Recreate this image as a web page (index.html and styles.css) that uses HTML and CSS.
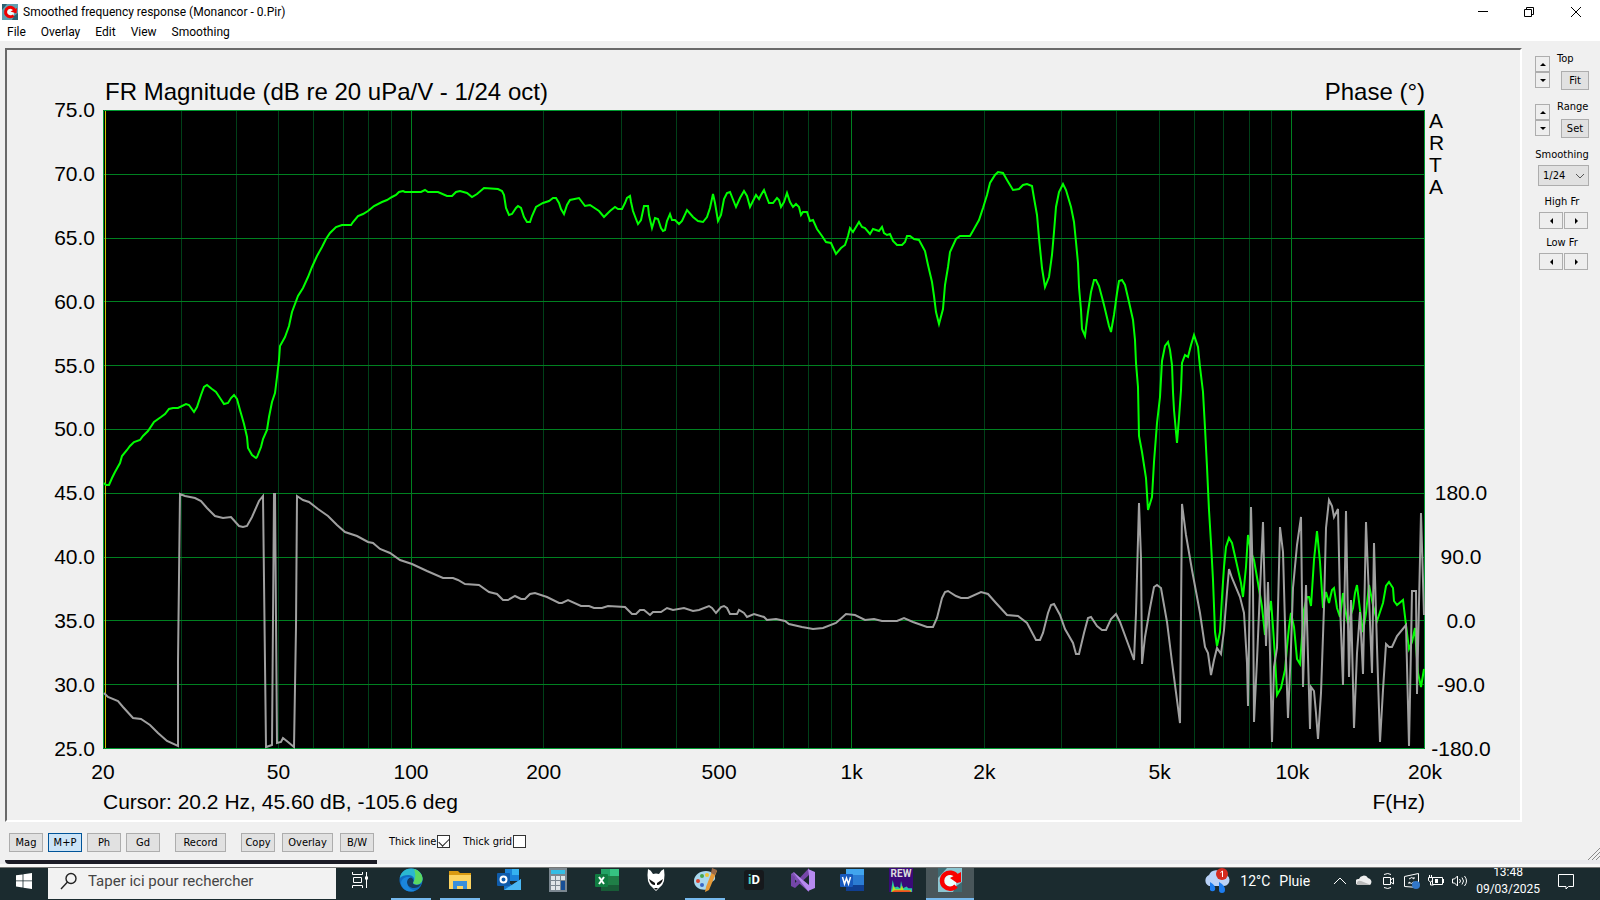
FILE: index.html
```html
<!DOCTYPE html>
<html lang="fr">
<head>
    <meta charset="UTF-8">
    <meta name="viewport" content="width=device-width, initial-scale=1.0">
    <title>Smoothed frequency response</title>
    <link rel="stylesheet" href="styles.css">
</head>
<body>
    <div class="window">
        <header class="titlebar">
            <svg class="app-icon" viewBox="0 0 16 16">
                <rect width="16" height="16" fill="#5f9fb0"/>
                <path d="M0 0h5L0 6zM12 12l4-3v7h-6z" fill="#2d5f70"/>
                <path d="M11.500 11.500A4.700 4.700 0 1 1 12.500 6" fill="#e8ffff" stroke="#f00000" stroke-width="3"/>
                <path d="M8.500 7.500L15 4l-.5 5.500z" fill="#f00000"/>
            </svg>
            <h1>Smoothed frequency response (Monancor - 0.Pir)</h1>
            <div class="win-buttons">
                <button aria-label="Minimize"><svg width="12" height="12" viewBox="0 0 12 12"><path d="M1 5.500h10" /></svg></button>
                <button aria-label="Restore"><svg width="12" height="12" viewBox="0 0 12 12"><path d="M1.500 3.500h7v7h-7zM3.500 3.500v-2h7v7h-2"/></svg></button>
                <button aria-label="Close"><svg width="12" height="12" viewBox="0 0 12 12"><path d="M1 1l10 10M11 1L1 11"/></svg></button>
            </div>
        </header>

        <nav class="menubar">
            <a href="#">File</a>
            <a href="#">Overlay</a>
            <a href="#">Edit</a>
            <a href="#">View</a>
            <a href="#">Smoothing</a>
        </nav>

        <main class="content">
            <section class="chart">
                <div class="chart-head">
                    <span class="magnitude">FR Magnitude (dB re 20 uPa/V - 1/24 oct)</span>
                    <span class="phase">Phase (°)</span>
                </div>

                <div class="db-axis">
                    <span>75.0</span>
                    <span>70.0</span>
                    <span>65.0</span>
                    <span>60.0</span>
                    <span>55.0</span>
                    <span>50.0</span>
                    <span>45.0</span>
                    <span>40.0</span>
                    <span>35.0</span>
                    <span>30.0</span>
                    <span>25.0</span>
                </div>

                <svg class="plot" viewBox="103 110 1322 639" preserveAspectRatio="none">
                    <rect class="back" x="103" y="110" width="1322" height="639"/>
                    <!-- frequency decades and their subdivisions -->
                    <path class="minor" d="M181.500 110V749M236.500 110V749M278.500 110V749M313.500 110V749M343.500 110V749M368.500 110V749M391.500 110V749M543.500 110V749M621.500 110V749M676.500 110V749M719.500 110V749M753.500 110V749M783.500 110V749M808.500 110V749M831.500 110V749M984.500 110V749M1061.500 110V749M1116.500 110V749M1159.500 110V749M1194.500 110V749M1223.500 110V749M1249.500 110V749M1271.500 110V749"/>
                    <path class="major" d="M103 174.500H1425M103 238.500H1425M103 301.500H1425M103 365.500H1425M103 429.500H1425M103 493.500H1425M103 557.500H1425M103 620.500H1425M103 684.500H1425M411.500 110V749M851.500 110V749M1291.500 110V749"/>
                    <rect class="border" x="103.500" y="110.500" width="1321" height="638"/>
                    <path class="cursor" d="M105.500 111V748"/>
                    <!-- magnitude -->
                    <polyline class="mag" points="104,483 106,485 109,485 112,478 115,472 120,463 122,456 127,450 130,446 134,442 140,440 143,436 148,431 154,422 161,417 165,414 169,409 173,408 178,408 186,404 189,405 194,412 197,407 201,395 204,387 207,385 212,389 216,392 220,398 224,404 228,403 231,398 234,395 237,399 240,410 244,424 247,437 248,448 252,455 256,458 257,457 261,447 263,439 267,430 269,417 272,402 275,393
                        277,377 279,360 280,346 285,337 289,326 292,312 298,296 303,288 308,277 312,267 317,256 322,247 326,239 330,233 336,227 342,225 351,225 353,222 358,216 363,214 368,211 374,206 382,202 387,200 392,197 396,195 399,192 403,191 405,192 421,192 425,190 428,192 438,192 447,196 452,196 456,192 460,191 467,193 472,197 477,194 484,188 498,189 502,191
                        504,195 506,208 509,215 512,214 516,208 518,206 521,208 524,217 527,222 530,222 532,216 536,207 543,203 549,201 553,198 556,198 559,203 561,209 564,214 567,205 570,200 579,198 582,202 585,206 590,205 599,211 604,217 610,211 615,207 618,209 622,209 625,203 627,198 630,196 631,202 633,211 636,219 638,224 641,220 644,206 648,206 649,215 652,228 655,218 658,219 661,228 663,231 665,230 667,221 670,214 672,220 675,220 679,224 682,221 687,210 693,217 698,221 703,222 707,217 710,208 713,194 715,203 718,221 721,215 724,199 727,193 730,192 732,197 736,207 740,198 744,191 747,196 750,207 756,195 759,199 761,195 764,190 767,198 769,203 773,203 777,198 779,200 781,207 784,202 787,193 790,202 793,207 796,204 799,207 801,215 803,212 807,212 810,221 813,220 817,229 822,236 826,242 831,243 836,254 841,248 845,245 848,236 850,228 853,232 859,222 862,227 865,228 870,234 873,229 879,231 882,227 884,233 887,235 890,234
                        893,241 897,245 902,245 905,242 907,236 910,236 914,239 919,240 925,251 928,265 932,282 934,296 936,312 939,324 943,309 945,285 948,267 950,252 956,239 960,236 970,236 974,229 979,220 983,208 987,195 990,183 995,175 998,172 1003,173 1007,180 1013,190 1019,189 1023,185 1027,184 1032,186 1034,198 1037,215 1039,238 1042,268 1045,287 1049,277 1052,255 1054,232 1056,207 1059,192 1063,184 1066,190 1071,207 1074,222 1076,242 1078,263 1079,287 1081,310 1082,329 1085,336 1088,312 1091,292 1094,280 1096,280 1099,286 1104,305 1109,326 1111,332 1114,315 1117,293 1119,281 1122,280 1125,285 1129,302 1133,320 1135,340 1136,363 1138,387 1139,436 1142,452 1146,478 1148,510
                        1152,497 1154,462 1157,423 1160,397 1162,361 1165,346 1168,342 1170,350 1172,365 1173,392 1174,410 1177,443 1179,418 1181,390 1182,363 1185,355 1188,357 1191,345 1194,335 1198,347 1200,367 1203,392 1205,428 1207,467 1209,510 1211,543 1213,580 1215,632 1217,646 1220,632 1222,597 1224,567 1226,547 1229,538 1232,543 1237,565 1241,583 1243,597 1246,567 1248,535 1251,552 1254,560 1258,583 1262,607 1265,635 1269,613 1271,601 1273,627 1275,657 1277,695 1281,688 1285,670 1287,647 1289,627 1291,613 1294,627 1297,659 1300,664 1302,637 1304,610 1307,597 1309,597 1311,606 1314,560 1317,531 1320,562 1323,608 1326,592 1329,603 1332,590 1334,588 1337,608 1340,617 1343,593 1345,608 1348,624 1353,608 1355,593 1357,585 1360,610 1363,632 1366,613 1369,585 1373,605 1377,621 1383,603 1386,586 1389,582 1393,588 1394,601 1397,605 1403,600 1406,625 1409,649 1412,642 1415,628 1416,645 1418,673 1421,687 1424,669"/>
                    <!-- phase -->
                    <polyline class="deg" points="104,693 108,697 118,701 123,707 133,718 141,719 150,725 158,733 167,741 178,746 178,662 180,494 185,496 195,498 201,501 207,508 215,516 223,518 231,517 239,526 243,527 247,526 252,517 259,501 263,496 264,580 266,747 272,745 274,494 275,494 277,743 281,742 283,738 288,742 294,747 296,627 297,496 303,500 309,502 318,509 328,516 337,525 345,532 357,536 368,542 373,543 380,549 390,553 400,560 412,564 427,571 443,578 453,578 458,580 465,584 479,585
                        489,592 497,594 503,600 508,600 515,596 521,599 525,599 530,594 535,593 547,597 559,603 562,603 568,600 581,606 589,606 594,608 602,608 608,606 625,607 632,614 636,614 640,610 644,610 650,615 653,612 661,612 667,608 673,610 684,608 693,611 699,610 709,606 712,608 716,613 721,607 724,606 727,608 730,614 737,614 739,610 744,613 747,617 754,614 764,617 767,620 776,619 785,621 789,624 802,627 813,629 823,628 836,623 846,614 855,615 865,620 874,619 882,621 897,621 904,618 913,622 927,627 933,627 937,618 942,598 945,592 948,591 956,596 961,598 968,598 981,592 988,594 996,603 1007,615 1018,616 1027,623 1036,640 1040,640 1043,633 1048,613 1051,605 1054,604 1060,615 1065,629 1073,643 1076,654 1079,654 1084,633 1088,618 1091,617 1097,626 1102,630 1106,630 1111,619 1116,614
                        1120,622 1134,660 1136,613 1139,503 1141,558 1142,664 1145,637 1150,608 1154,587 1157,585 1161,588 1167,622 1172,662 1180,723 1181,613 1182,504 1186,535 1192,570 1200,613 1205,647 1208,653 1211,675 1214,660 1217,648 1221,654 1224,630 1227,592 1229,569 1232,578 1240,597 1244,613 1247,663 1248,706 1251,507 1253,587 1254,722 1257,660 1260,590 1263,522 1266,646 1268,582 1270,653 1272,742 1274,667 1277,648 1280,527 1283,552 1286,660 1288,718 1291,647 1293,588 1297,545 1301,517 1302,597 1303,687 1306,585 1310,729 1311,687 1314,691 1316,713 1318,739 1321,693 1324,607 1326,528 1329,500 1332,506 1334,517 1338,509 1340,603 1343,685 1346,511 1349,677 1351,600 1354,728 1357,653 1360,612 1363,674 1366,522 1372,673 1374,543 1377,647 1380,742 1383,690 1386,644 1389,647 1392,647 1397,636 1406,625 1409,746 1411,647 1412,591 1416,591 1417,694 1421,513 1424,615"/>
                </svg>

                <div class="right-axis">
                    <p class="brand">A<br>R<br>T<br>A</p>
                    <div class="deg-axis">
                        <span>180.0</span>
                        <span>90.0</span>
                        <span>0.0</span>
                        <span>-90.0</span>
                        <span>-180.0</span>
                    </div>
                </div>

                <div class="freq-axis">
                    <span>20</span>
                    <span>50</span>
                    <span>100</span>
                    <span>200</span>
                    <span>500</span>
                    <span>1k</span>
                    <span>2k</span>
                    <span>5k</span>
                    <span>10k</span>
                    <span>20k</span>
                </div>

                <div class="chart-foot">
                    <span>Cursor: 20.2 Hz, 45.60 dB, -105.6 deg</span>
                    <span>F(Hz)</span>
                </div>
            </section>

            <aside class="side">
                <div class="spin-row">
                    <div class="spin">
                        <button class="up" aria-label="Top up"></button>
                        <button class="down" aria-label="Top down"></button>
                    </div>
                    <div class="spin-side">
                        <span>Top</span>
                        <button>Fit</button>
                    </div>
                </div>
                <div class="spin-row">
                    <div class="spin">
                        <button class="up" aria-label="Range up"></button>
                        <button class="down" aria-label="Range down"></button>
                    </div>
                    <div class="spin-side">
                        <span>Range</span>
                        <button>Set</button>
                    </div>
                </div>
                <label class="side-label" for="smoothing">Smoothing</label>
                <div class="select">
                    <select id="smoothing">
                        <option>1/24</option>
                        <option>1/12</option>
                        <option>1/6</option>
                        <option>1/3</option>
                    </select>
                    <svg width="10" height="6" viewBox="0 0 10 6"><path d="M1 1l4 4 4-4" fill="none" stroke="#555"/></svg>
                </div>
                <span class="side-label">High Fr</span>
                <div class="pair">
                    <button class="left" aria-label="High down"></button>
                    <button class="right" aria-label="High up"></button>
                </div>
                <span class="side-label">Low Fr</span>
                <div class="pair">
                    <button class="left" aria-label="Low down"></button>
                    <button class="right" aria-label="Low up"></button>
                </div>
            </aside>
        </main>

        <footer class="toolbar">
            <div class="group">
                <button>Mag</button>
                <button class="active">M+P</button>
                <button>Ph</button>
                <button>Gd</button>
            </div>
            <button class="wide">Record</button>
            <div class="group copy">
                <button>Copy</button>
                <button class="wide">Overlay</button>
                <button>B/W</button>
            </div>
            <label>Thick line <input type="checkbox" checked></label>
            <label>Thick grid <input type="checkbox"></label>
            <svg class="grip" width="12" height="12" viewBox="0 0 12 12"><path d="M0 12L12 0M4 12l8-8M8 12l4-4" stroke="#8a8a8a"/></svg>
        </footer>
    </div>

    <div class="behind">
        <div class="behind-dark"></div>
    </div>

    <div class="taskbar">
        <button class="task start" aria-label="Démarrer">
            <svg width="16" height="16" viewBox="0 0 16 16"><path d="M0 2.300l6.600-.9v6.100H0zM7.400 1.300L16 0v7.500H7.400zM0 8.300h6.600v6.200L0 13.600zM7.400 8.300H16V16l-8.600-1.300z" fill="#fff"/></svg>
        </button>
        <div class="search">
            <svg width="18" height="18" viewBox="0 0 18 18" fill="none" stroke="#222" stroke-width="1.400"><circle cx="11" cy="6.500" r="5"/><path d="M7.500 10L1 17"/></svg>
            <input type="text" placeholder="Taper ici pour rechercher" aria-label="Rechercher">
        </div>
        <button class="task" aria-label="Affichage des tâches">
            <svg width="17" height="16" viewBox="0 0 17 16" fill="none" stroke="#fff"><path d="M.5 0v2.500h10V0M1.500 5.500h8v5h-8zM.5 16v-2.500h10V16M14.500 0v16"/><path d="M13 4.500h3v3h-3z" fill="#fff" stroke="none"/></svg>
        </button>
        <div class="apps">
            <button class="task open" aria-label="Edge">
                <svg width="24" height="24" viewBox="0 0 24 24">
                    <circle cx="12" cy="12" r="11.500" fill="#0f6cc4"/>
                    <path d="M.8 10C2 3.500 7 .5 12 .5c7 0 11.500 5 11.500 10 0 4-3 6-6 6-2.500 0-4-1-3-2.500 2-3 0-7-5-7C6 7 2.500 8 .8 10z" fill="#2bb8d0"/>
                    <path d="M15 1c5 1.500 8.500 5.500 8.500 9.500 0 4-3 6-6 6-2.500 0-4-1-3-2.500 2.500-4 2-9 .5-13z" fill="#5bd860"/>
                    <path d="M8 14c0-3 2-4.500 4-4.500 2.500 1 3 3 2 5-.5 2 3 3.500 8 1.500-2 3-4 4-7 4-4 0-7-2.500-7-6z" fill="#173b5e"/>
                    <path d="M8 14c0 5 4 8 9 8.500-7 3-14-1-15-7 0-5 5-7.500 10-6-2 0-4 1.500-4 4.500z" fill="#1b86dc"/>
                </svg>
            </button>
            <button class="task open" aria-label="Explorateur">
                <svg width="24" height="24" viewBox="0 0 24 24"><path d="M1 3h9l2 2h11v5H1z" fill="#d99a12"/><path d="M1 7h22v14H1z" fill="#fcd462"/><path d="M5 21v-8h14v8h-4v-3H9v3z" fill="#3a8fdc"/></svg>
            </button>
            <button class="task" aria-label="Outlook">
                <svg width="24" height="24" viewBox="0 0 24 24"><path d="M8 1h14v12H8z" fill="#1a82d8"/><path d="M15 1h7v6h-7z" fill="#35b2f0"/><path d="M7 12l8 5 9-6v11H7z" fill="#1472c8"/><path d="M7 22l17-11v11z" fill="#4bb8f4"/><rect y="5" width="13" height="13" rx="1" fill="#0f5cab"/><circle cx="6.500" cy="11.500" r="3" fill="none" stroke="#fff" stroke-width="2"/></svg>
            </button>
            <button class="task" aria-label="Calculatrice">
                <svg width="24" height="24" viewBox="0 0 24 24"><path d="M3 0h18v24H3z" fill="#7b8790"/><path d="M5 2h14v4H5z" fill="#35bde4"/><path d="M5 8h4v4H5zM10 8h4v4h-4zM15 8h4v4h-4zM5 13h4v4H5zM10 13h4v4h-4zM5 18h4v4H5zM10 18h4v4h-4z" fill="#dfe5e8"/><path d="M15 13h4v9h-4z" fill="#174f96"/></svg>
            </button>
            <button class="task" aria-label="Excel">
                <svg width="24" height="24" viewBox="0 0 24 24"><path d="M6 1h18v22H6z" fill="#1f7f47"/><path d="M15 1h9v7h-9z" fill="#35c481"/><path d="M6 1h9v7H6z" fill="#23a366"/><path d="M6 17h18v6H6z" fill="#185c37"/><rect y="6" width="13" height="13" rx="1" fill="#107c41"/><path d="M4 9l5 7M9 9l-5 7" stroke="#fff" stroke-width="2"/></svg>
            </button>
            <button class="task" aria-label="foobar2000">
                <svg width="24" height="24" viewBox="0 0 24 24"><path d="M4 1q3 1 5 5 3-1 6 0 2-4 5-5 1 6 0 12-1 4-5 7l-3 3-3-3q-4-3-5-7-1-6 0-12z" fill="#fff"/><path d="M5 11l6 4v2c-3 0-5-2-6-6zM19 11l-6 4v2c3 0 5-2 6-6zM10 20h4l-2 2z" fill="#111"/></svg>
            </button>
            <button class="task open" aria-label="Paint">
                <svg width="24" height="24" viewBox="0 0 24 24"><path d="M1 13C1 7 7 3 13 3c6 0 10 4 9 8-1 3-4 2-5 4s1 3-1 5c-4 4-15 1-15-7z" fill="#a9d8ee"/><circle cx="5" cy="13" r="2" fill="#d84532"/><circle cx="9" cy="8" r="2" fill="#49a64b"/><circle cx="14" cy="7" r="2" fill="#f0c532"/><circle cx="9" cy="17" r="2" fill="#3a68c8"/><path d="M20 1l4 2-8 19-4 2 1-5z" fill="#e59a38"/><path d="M19 0l5 2-2 5-4-2z" fill="#9a6a48"/></svg>
            </button>
            <button class="task" aria-label="iD">
                <span class="id-logo"><i>i</i>D</span>
            </button>
            <button class="task" aria-label="Visual Studio">
                <svg width="24" height="24" viewBox="0 0 24 24"><path d="M0 6l3-2 15 14v6L0 8z" fill="#8256b8"/><path d="M0 6v12l4 2L18 7V0L4 15V9z" fill="#7446a8"/><path d="M2 4l16 13V7l-1-6 7 3v16l-7 3z" fill="#b78af0"/></svg>
            </button>
            <button class="task" aria-label="Word">
                <svg width="24" height="24" viewBox="0 0 24 24"><path d="M6 1h18v22H6z" fill="#2b7cd3"/><path d="M6 1h18v6H6z" fill="#41a5ee"/><path d="M6 17h18v6H6z" fill="#103f91"/><rect y="6" width="13" height="13" rx="1" fill="#185abd"/><path d="M2.500 9l2 7 2-6 2 6 2-7" fill="none" stroke="#fff" stroke-width="1.500"/></svg>
            </button>
            <button class="task" aria-label="REW">
                <span class="rew-logo">REW
                    <svg width="24" height="12" viewBox="0 0 24 13"><path d="M1 13L3 0l2 8 3-1 3 2 1-8 2 8 4-2 2 2 4 0v4z" fill="#27c8a0"/><path d="M2 13l2-7 2 4 5 0 2-4 2 5 8 0v2z" fill="#b8e020"/><path d="M2 13l3-2h16l2 2z" fill="#f05020"/></svg>
                </span>
            </button>
            <button class="task current" aria-label="ARTA">
                <svg width="24" height="24" viewBox="0 0 24 24"><rect width="24" height="24" fill="#8cc6d2"/><path d="M0 0h9L0 10zM17 19l7-5v10h-9z" fill="#3e6c74"/><path d="M18 18A8 8 0 1 1 18.500 8" fill="#eaffff" stroke="#f80000" stroke-width="4.500"/><path d="M12 10l11-6v10l-4 1z" fill="#f80000"/></svg>
            </button>
        </div>

        <div class="tray">
            <div class="weather">
                <svg width="28" height="26" viewBox="0 0 28 26"><path d="M6 18a6 6 0 0 1 0-11 8 8 0 0 1 14-1 6 6 0 0 1 1 12z" fill="#b9d2f8"/><path d="M7 14q6 3 5 8a3 3 0 0 1-5 0zM16 14q6 3 6 8a3 3 0 0 1-6 0z" fill="#1d7df0"/><circle cx="19" cy="6" r="6" fill="#d42a1e"/><path d="M17.500 4.500L19.500 3v6" fill="none" stroke="#fff"/></svg>
                <span>12°C</span>
                <span>Pluie</span>
            </div>
            <svg class="tray-icon" width="16" height="20" viewBox="0 0 16 20"><path d="M2 13l6-6 6 6"/></svg>
            <svg class="tray-icon" width="16" height="20" viewBox="0 0 16 20"><path d="M2 14a3 3 0 0 1 1-6 5 5 0 0 1 9-1 4 4 0 0 1 2 7z" fill="#eee" stroke="none"/><path d="M1 14a3 3 0 0 1 4-4l10 4z" fill="#bbb" stroke="none"/></svg>
            <svg class="tray-icon" width="16" height="20" viewBox="0 0 16 20"><path d="M3.500 6.500h7v7h-7zM10.500 9l3-2v6l-3-2M4 3.500q4-2 7 0M4 16.500q4 2 7 0"/></svg>
            <svg class="tray-icon" width="16" height="20" viewBox="0 0 16 20"><path d="M.5 5.500l14-3v14l-14-1zM5 8q3-3 5 0V6M10 11q-3 3-5 0v2"/><circle cx="12" cy="14" r="4" fill="#3277c8" stroke="none"/></svg>
            <svg class="tray-icon" width="16" height="20" viewBox="0 0 16 20"><path d="M4.500 6.500h10v7h-10zM15.500 8v4M.5 6.500h4v3l-2 1.500-2-1.500zM1.500 4v2M3.500 4v2M2.500 11v3h3"/><path d="M7 8h3v4H7z" fill="#fff" stroke="none"/></svg>
            <svg class="tray-icon" width="16" height="20" viewBox="0 0 16 20"><path d="M.5 8h2l3-3v10l-3-3h-2zM7.500 8q2 2 0 4M10 6.500q3 3.500 0 7M12.500 5q4 5 0 10"/></svg>
            <div class="clock">
                <span>13:48</span>
                <span>09/03/2025</span>
            </div>
            <svg class="tray-icon" width="17" height="18" viewBox="0 0 17 18"><path d="M.5 2.500h15v12h-5l-2.500 2.500v-2.500h-7.500z"/></svg>
        </div>
    </div>
</body>
</html>
```

FILE: styles.css
```css
* {
    box-sizing: border-box;
}

body {
    margin: 0;
    min-height: 100vh;
    display: flex;
    flex-direction: column;
    background: #f0f0f0;
    color: #000;
    font-family: Roboto, "Open Sans", sans-serif;
    font-size: 12px;
}

button, select, input {
    font: inherit;
    color: inherit;
    padding: 0;
    margin: 0;
}

svg {
    display: block;
    flex: none;
}

.window {
    flex: 1;
    display: flex;
    flex-direction: column;
}

/* title and menu */
.titlebar {
    display: flex;
    align-items: center;
    height: 23px;
    padding-left: 2px;
    background: #fff;
}

.app-icon {
    width: 16px;
    height: 16px;
}

.titlebar h1 {
    margin: 0 0 0 5px;
    font-size: 12px;
    font-weight: normal;
}

.win-buttons {
    display: flex;
    margin-left: auto;
}

.win-buttons button {
    display: flex;
    align-items: center;
    justify-content: center;
    width: 46px;
    height: 20px;
    border: 0;
    background: none;
}

.win-buttons button:last-child {
    width: 48px;
}

.win-buttons path {
    fill: none;
    stroke: #000;
}

.menubar {
    display: flex;
    align-items: center;
    gap: 15px;
    height: 18px;
    padding: 0 7px;
    background: #fff;
}

.menubar a {
    color: #000;
    text-decoration: none;
}

.content {
    flex: 1;
    display: flex;
    padding: 7px 0 0 5px;
}

/* chart */
.chart {
    flex: 1;
    display: grid;
    grid-template-columns: 96px 1fr 95px;
    grid-template-rows: 60px 1fr 38px 33px;
    border: 2px solid;
    border-color: #696969 #fff #fff #696969;
    font-family: "Liberation Sans", Arial, sans-serif;
    font-size: 21px;
    line-height: 22px;
}

.chart-head {
    grid-column: 2;
    display: flex;
    justify-content: space-between;
    align-items: flex-end;
    padding: 0 0 6px 2px;
    font-size: 24px;
    line-height: 24px;
}

.db-axis {
    grid-column: 1;
    grid-row: 2;
    display: flex;
    flex-direction: column;
    justify-content: space-between;
    margin: -11px 8px -11px 0;
    text-align: right;
}

.plot {
    grid-column: 2;
    grid-row: 2;
    width: 100%;
    height: 100%;
    min-height: 0;
}

.plot path, .plot polyline, .plot .border {
    fill: none;
    stroke-width: 1;
    vector-effect: non-scaling-stroke;
}

.plot .minor { stroke: #004018; }
.plot .major { stroke: #008020; }
.plot .border { stroke: #009a30; }
.plot .cursor { stroke: #c8c800; }
.plot .mag { stroke: #00ff00; stroke-width: 2; }
.plot .deg { stroke: #a0a0a0; stroke-width: 2; }

.right-axis {
    grid-column: 3;
    grid-row: 2;
    display: flex;
    flex-direction: column;
    justify-content: space-between;
}

.brand {
    margin: 0;
    padding-left: 4px;
}

/* +-180 deg covers the lower four divisions */
.deg-axis {
    display: flex;
    flex-direction: column;
    justify-content: space-between;
    width: 72px;
    height: calc(40% + 22px);
    margin-bottom: -11px;
    text-align: center;
}

.freq-axis {
    grid-column: 2;
    display: grid;
    /* log10 distance between neighbouring labels */
    grid-template-columns: 398fr 301fr 301fr 398fr 301fr 301fr 398fr 301fr 301fr 0;
    padding-top: 12px;
}

.freq-axis span {
    display: flex;
    justify-content: center;
    width: 0;
    white-space: nowrap;
}

.chart-foot {
    grid-column: 2;
    display: flex;
    justify-content: space-between;
    padding-top: 4px;
}

/* buttons */
.side button, .toolbar button {
    border: 1px solid #adadad;
    background: #e1e1e1;
    line-height: 15px;
}

.side, .toolbar {
    font-family: "DejaVu Sans Condensed", "DejaVu Sans", sans-serif;
    font-size: 11px;
}

.side {
    width: 78px;
    padding: 3px 11px 0 13px;
}

.spin-row {
    display: flex;
    gap: 7px;
    height: 48px;
}

.spin {
    display: flex;
    flex-direction: column;
    padding-top: 5px;
}

.spin button {
    width: 15px;
    height: 16px;
}

.spin-side {
    display: flex;
    flex-direction: column;
    width: 32px;
    line-height: 16px;
}

.spin-side button {
    align-self: flex-end;
    width: 28px;
    height: 19px;
    margin-top: 4px;
}

.side-label {
    display: block;
    line-height: 16px;
    text-align: center;
    white-space: nowrap;
}

.select {
    display: flex;
    align-items: center;
    position: relative;
    margin: 2px 0 8px 3px;
}

.select select {
    width: 100%;
    height: 21px;
    padding-left: 4px;
    border: 1px solid #adadad;
    border-radius: 0;
    background: #e1e1e1;
    appearance: none;
}

.select svg {
    position: absolute;
    right: 4px;
}

.pair {
    display: flex;
    gap: 1px;
    margin: 2px 0 6px 4px;
}

.pair button {
    width: 24px;
    height: 17px;
}

.side .up, .side .down, .side .left, .side .right {
    display: flex;
    align-items: center;
    justify-content: center;
    background: #eee;
}

.side .up::before, .side .down::before, .side .left::before, .side .right::before {
    content: "";
    border: 3px solid transparent;
}

.side .up::before { border-top: 0; border-bottom-color: #000; }
.side .down::before { border-bottom: 0; border-top-color: #000; }
.side .left::before { border-left: 0; border-right-color: #000; }
.side .right::before { border-right: 0; border-left-color: #000; }

/* bottom toolbar */
.toolbar {
    display: flex;
    align-items: flex-start;
    height: 38px;
    padding: 11px 0 0 9px;
    position: relative;
}

.toolbar button {
    width: 34px;
    height: 19px;
}

.toolbar .wide {
    width: 51px;
}

.toolbar .active {
    border-color: #005499;
    background: #cce4f7;
}

.group {
    display: flex;
    gap: 5px;
    margin-right: 15px;
}

.group.copy {
    gap: 7px;
    margin-left: 15px;
}

.toolbar label {
    display: flex;
    align-items: center;
    gap: 1px;
    height: 17px;
    margin-right: 13px;
}

.toolbar input {
    appearance: none;
    width: 13px;
    height: 13px;
    border: 1px solid #333;
    background: #fff;
}

.toolbar input:checked::before {
    content: "";
    display: block;
    width: 9px;
    height: 5px;
    margin: 2px 0 0 1px;
    border: solid #222;
    border-width: 0 0 1px 1px;
    transform: rotate(-45deg);
}

.grip {
    position: absolute;
    right: 0;
    bottom: 0;
}

/* strip of the window below */
.behind {
    height: 8px;
    padding-left: 5px;
    border-bottom: 1px solid #777;
    background: linear-gradient(#eaeaee 4px, #f8f8f8 4px);
}

.behind-dark {
    width: 372px;
    height: 4px;
    border-radius: 0 0 0 4px;
    background: #1c1c26;
}

/* taskbar */
.taskbar {
    display: flex;
    height: 32px;
    overflow: hidden;
    background: #1b2b2f;
    color: #fff;
}

.task {
    display: flex;
    align-items: center;
    justify-content: center;
    width: 48px;
    height: 32px;
    padding-bottom: 8px;
    border: 0;
    background: none;
}

.start {
    padding-bottom: 6px;
}

.search {
    display: flex;
    align-items: center;
    gap: 10px;
    width: 288px;
    height: 31px;
    padding: 0 12px 6px;
    background: #f2f2f2;
}

.search input {
    flex: 1;
    min-width: 0;
    border: 0;
    background: none;
    font-size: 15px;
}

.search input::placeholder {
    color: #444;
    opacity: 1;
}

.apps {
    display: flex;
    gap: 1px;
    margin-left: 3px;
}

.open {
    width: 40px;
    margin: 0 4px;
    border-bottom: 2px solid #76b9ed;
    padding-bottom: 6px;
}

.current {
    border-bottom: 2px solid #76b9ed;
    padding-bottom: 6px;
    background: #49565a;
}

.id-logo {
    width: 20px;
    height: 20px;
    border-radius: 3px;
    background: #16191c;
    font-size: 13px;
    font-weight: bold;
    line-height: 20px;
}

.id-logo i {
    font-style: normal;
    color: #4fd0c0;
}

.rew-logo {
    width: 24px;
    height: 24px;
    background: #3a0a78;
    color: #ddd;
    font-size: 10px;
    font-weight: bold;
    line-height: 12px;
}

.tray {
    display: flex;
    gap: 8px;
    height: 25px;
    margin: 0 5px 0 auto;
    padding-right: 20px;
    align-items: center;
}

.weather {
    display: flex;
    align-items: center;
    gap: 9px;
    margin-right: 14px;
    font-size: 14px;
}

.tray-icon {
    fill: none;
    stroke: #fff;
}

/* two lines are taller than the visible bar, the first is cut */
.clock {
    display: flex;
    flex-direction: column;
    align-items: center;
    margin-right: 10px;
    line-height: 17px;
}
```
